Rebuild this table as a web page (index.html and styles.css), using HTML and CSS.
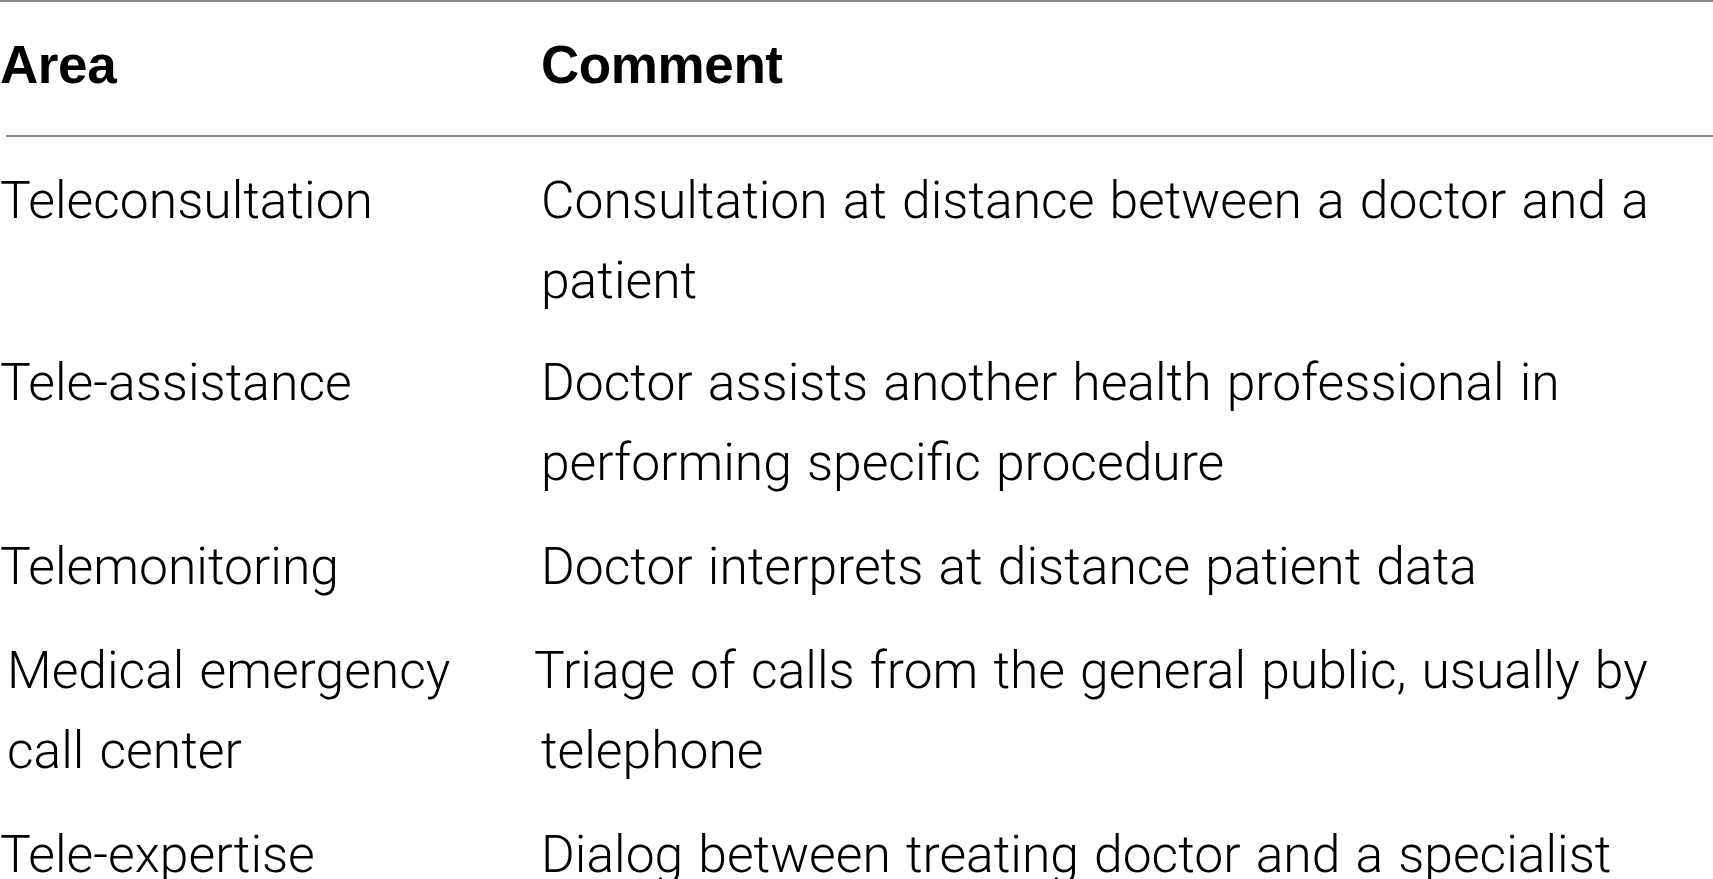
FILE: index.html
```html
<!DOCTYPE html>
<html lang="en">
<head>
<meta charset="utf-8">
<title>Telemedicine areas</title>
<link rel="stylesheet" href="styles.css">
</head>
<body>
<table class="areas">
  <thead>
    <tr>
      <th class="col-area">Area</th>
      <th class="col-comment">Comment</th>
    </tr>
  </thead>
  <tbody>
    <tr class="first">
      <td class="col-area">Teleconsultation</td>
      <td class="col-comment">Consultation at distance between a doctor and a patient</td>
    </tr>
    <tr>
      <td class="col-area">Tele-assistance</td>
      <td class="col-comment">Doctor assists another health professional in performing specific procedure</td>
    </tr>
    <tr>
      <td class="col-area">Telemonitoring</td>
      <td class="col-comment">Doctor interprets at distance patient data</td>
    </tr>
    <tr class="shifted">
      <td class="col-area">Medical emergency call center</td>
      <td class="col-comment"><span class="outdent">Triage of calls from the general public, usually by</span> telephone</td>
    </tr>
    <tr>
      <td class="col-area">Tele-expertise</td>
      <td class="col-comment">Dialog between treating doctor and a specialist</td>
    </tr>
  </tbody>
</table>
</body>
</html>
```

FILE: styles.css
```css
html, body {
  margin: 0;
  padding: 0;
  background: #ffffff;
}

body {
  width: 1713px;
  height: 879px;
  overflow: hidden;
  color: #000000;
  font-family: Roboto, "Liberation Sans", sans-serif;
}

.areas {
  width: 1713px;
  border-collapse: collapse;
  border-spacing: 0;
  table-layout: fixed;
  border-top: 2px solid #8c8c8c;
  margin-top: 0;
}

.areas th,
.areas td {
  box-sizing: border-box;
  padding: 0;
  text-align: left;
  vertical-align: top;
}

.areas .col-area {
  width: 541px;
  padding-left: 0;
  padding-right: 60px;
}

.areas .col-comment {
  padding-right: 40px;
}

.areas thead th {
  font-family: "Liberation Sans", Arial, sans-serif;
  font-weight: 700;
  font-size: 53px;
  line-height: 60px;
  padding-top: 33px;
  padding-bottom: 42px;
  letter-spacing: -0.4px;
}

.areas thead tr {
  box-shadow: inset 0 -2px 0 #8c8c8c;
}

.areas thead th.col-area {
  background: linear-gradient(to right, #fff 0, #fff 6px, transparent 6px);
}

.areas td {
  font-weight: 300;
  font-size: 51.6px;
  line-height: 80px;
  letter-spacing: 0;
  word-spacing: 2.5px;
  padding-top: 12px;
  padding-bottom: 12px;
}

.areas tr.first td {
  padding-top: 24px;
  padding-bottom: 10px;
}

.areas tr.shifted td.col-area {
  padding-left: 7px;
}

.outdent {
  margin-left: -7px;
}
```
